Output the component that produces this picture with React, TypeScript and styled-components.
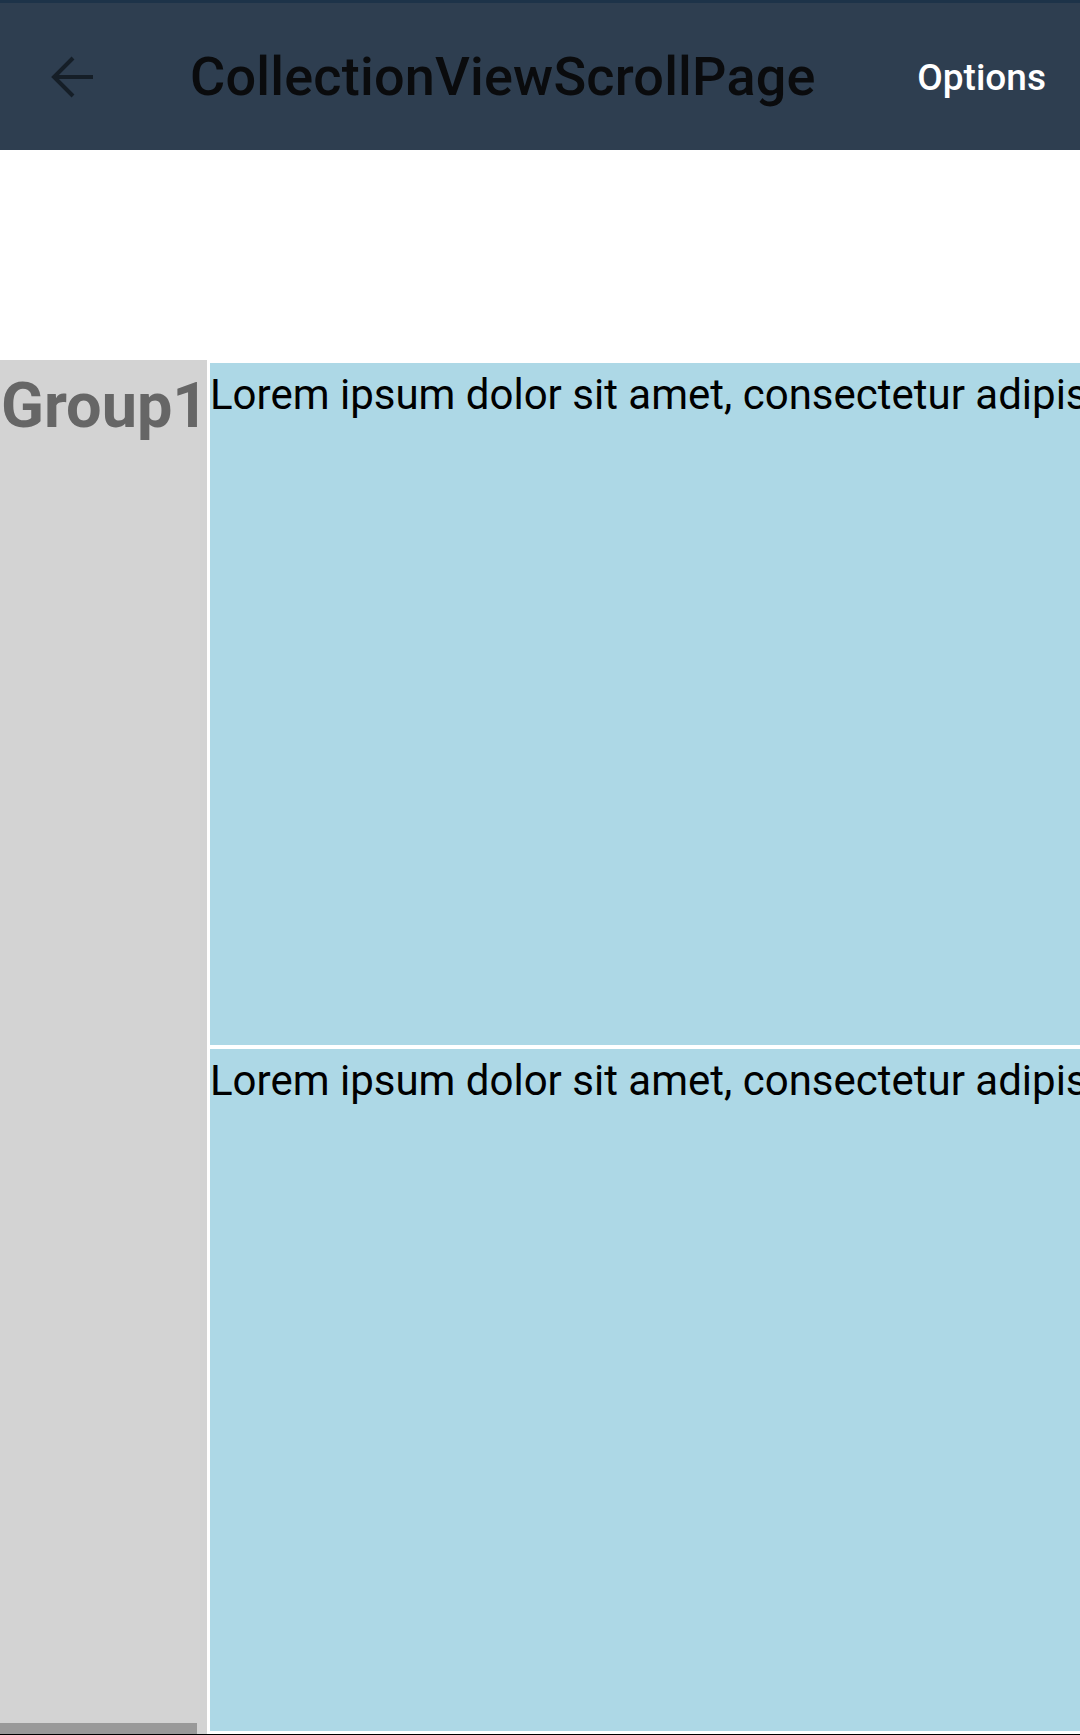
import React from 'react';
import styled, { createGlobalStyle } from 'styled-components';

const GlobalStyle = createGlobalStyle`
  html, body {
    margin: 0;
    padding: 0;
    background: #ffffff;
    overflow: hidden;
  }
  body {
    font-family: Roboto, 'Noto Sans', sans-serif;
  }
`;

const SPage = styled.div`
  width: 1080px;
  height: 1735px;
  display: flex;
  flex-direction: column;
  overflow: hidden;
  border-bottom: 1px solid #000;
  box-sizing: border-box;
`;

const SToolbar = styled.header`
  height: 150px;
  flex-shrink: 0;
  display: flex;
  align-items: center;
  background-color: #2e3e50;
  border-top: 3px solid #1d3349;
  box-sizing: border-box;
  padding: 0 34px 0 43px;
`;

const SBackButton = styled.div`
  width: 60px;
  height: 60px;
  display: flex;
  align-items: center;
  justify-content: center;
  color: #151e27;
`;

const STitle = styled.h1`
  margin: 0 0 0 87px;
  flex: 1;
  font-size: 54px;
  font-weight: 500;
  color: #0a0b0d;
  letter-spacing: 0.2px;
  white-space: nowrap;
`;

const SOptions = styled.div`
  font-size: 37px;
  font-weight: 500;
  color: #ffffff;
  margin-top: 2px;
`;

const SSpacer = styled.div`
  height: 210px;
  flex-shrink: 0;
`;

const SGroupRow = styled.div`
  flex: 1;
  display: flex;
  gap: 3px;
  min-height: 0;
`;

const SGroupHeader = styled.div`
  width: 207px;
  flex-shrink: 0;
  background-color: #d3d3d3;
  position: relative;
  overflow: hidden;
`;

const SGroupTitle = styled.div`
  font-size: 63px;
  font-weight: 700;
  color: #666666;
  line-height: 1;
  padding-top: 14px;
  margin-left: 1px;
  white-space: nowrap;
`;

const SScrollThumb = styled.div`
  position: absolute;
  left: 0;
  bottom: 0;
  width: 197px;
  height: 11px;
  background-color: #999999;
`;

const SItems = styled.div`
  flex: 1;
  display: flex;
  flex-direction: column;
  gap: 4px;
  padding-top: 3px;
  overflow: hidden;
`;

const SItem = styled.div`
  height: 682px;
  flex-shrink: 0;
  background-color: #add8e6;
  overflow: hidden;
`;

const SItemText = styled.div`
  font-size: 42px;
  color: #000000;
  white-space: nowrap;
  line-height: 1;
  padding-top: 11px;
`;

const LOREM = 'Lorem ipsum dolor sit amet, consectetur adipiscing elit, sed do eiusmod tempor incididunt ut labore';

export default function App() {
  return (
    <>
      <GlobalStyle />
      <SPage>
        <SToolbar>
          <SBackButton>
            <svg width='44' height='44' viewBox='0 0 44 44' fill='none' stroke='currentColor' strokeWidth='4'>
              <path d='M42 22H4M22 3L3 22l19 19' />
            </svg>
          </SBackButton>
          <STitle>CollectionViewScrollPage</STitle>
          <SOptions>Options</SOptions>
        </SToolbar>
        <SSpacer />
        <SGroupRow>
          <SGroupHeader>
            <SGroupTitle>Group1</SGroupTitle>
            <SScrollThumb />
          </SGroupHeader>
          <SItems>
            <SItem>
              <SItemText>{LOREM}</SItemText>
            </SItem>
            <SItem>
              <SItemText>{LOREM}</SItemText>
            </SItem>
          </SItems>
        </SGroupRow>
      </SPage>
    </>
  );
}
